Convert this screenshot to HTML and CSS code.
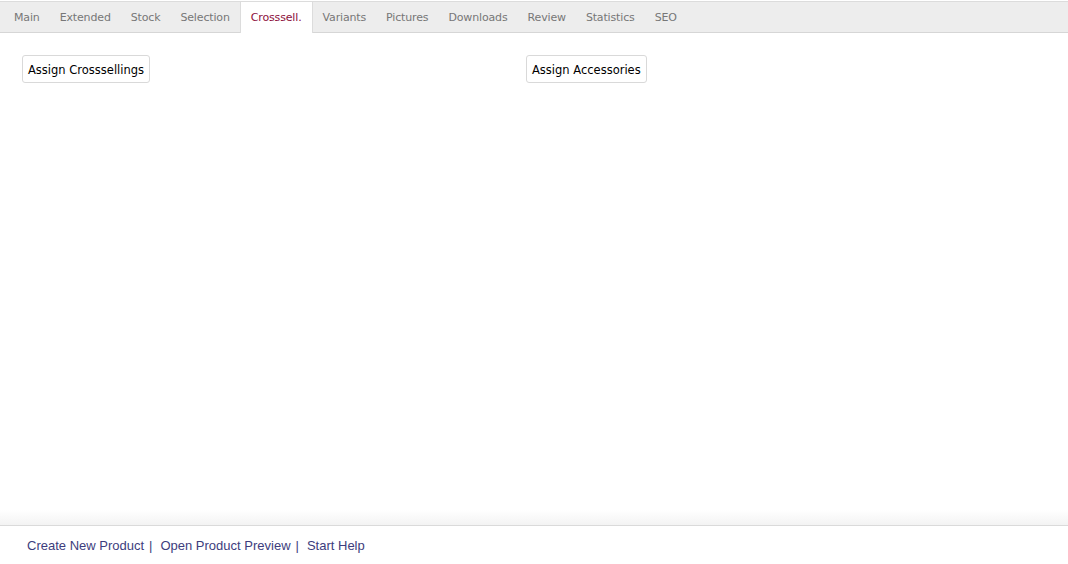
FILE: index.html
```html
<!DOCTYPE html>
<html>
<head>
<meta charset="utf-8">
<link rel="stylesheet" href="styles.css">
</head>
<body>
<div class="page">
  <nav class="tabs">
    <a class="tab">Main</a>
    <a class="tab">Extended</a>
    <a class="tab">Stock</a>
    <a class="tab">Selection</a>
    <a class="tab active">Crosssell.</a>
    <a class="tab">Variants</a>
    <a class="tab">Pictures</a>
    <a class="tab">Downloads</a>
    <a class="tab">Review</a>
    <a class="tab">Statistics</a>
    <a class="tab">SEO</a>
  </nav>
  <main class="content">
    <div class="col"><button class="btn">Assign Crosssellings</button></div>
    <div class="col"><button class="btn">Assign Accessories</button></div>
  </main>
  <footer class="footer">
    <a class="flink">Create New Product</a><span class="sep">|</span>
    <a class="flink">Open Product Preview</a><span class="sep">|</span>
    <a class="flink">Start Help</a>
  </footer>
</div>
</body>
</html>
```
FILE: styles.css
```css
html, body {
  margin: 0;
  padding: 0;
  background: #fff;
}
.page {
  display: flex;
  flex-direction: column;
  height: 564px;
  overflow: hidden;
}
.tabs {
  margin-top: 1px;
  display: flex;
  align-items: stretch;
  height: 30px;
  padding-left: 4px;
  background: #ededed;
  border-top: 1px solid #dcdcdc;
  border-bottom: 1px solid #d6d6d6;
  font-family: "DejaVu Sans", Verdana, sans-serif;
  font-size: 11px;
  letter-spacing: -0.15px;
}
.tab {
  display: flex;
  align-items: center;
  padding: 0 10px;
  color: #777;
  cursor: pointer;
}
.tab.active {
  background: #fff;
  color: #8c0f3c;
  box-shadow: -1px 0 0 #dcdcdc, 1px 0 0 #dcdcdc;
  margin: 0 1px -1px;
}
.content {
  flex: 1;
  display: grid;
  grid-template-columns: 504px 1fr;
  padding: 22px 0 0 22px;
  align-items: start;
  align-content: start;
}
.btn {
  font-family: "DejaVu Sans", Verdana, sans-serif;
  font-size: 11.5px;
  color: #000;
  background: #fff;
  border: 1px solid #d9d9d9;
  border-radius: 3px;
  height: 28px;
  padding: 1px 5px 0;
  cursor: pointer;
}
.footer {
  position: relative;
  height: 38px;
  border-top: 1px solid #dadada;
  display: flex;
  align-items: center;
  padding-left: 27px;
  font-family: "Liberation Sans", Arial, sans-serif;
  font-size: 13px;
  color: #3d3d7d;
  box-sizing: content-box;
}
.footer::before {
  content: "";
  position: absolute;
  left: 0;
  right: 0;
  top: -16px;
  height: 15px;
  background: linear-gradient(to bottom, rgba(240,240,240,0), #f3f3f3);
}
.flink {
  cursor: pointer;
}
.sep {
  margin: 0 8px 0 5px;
}
```
